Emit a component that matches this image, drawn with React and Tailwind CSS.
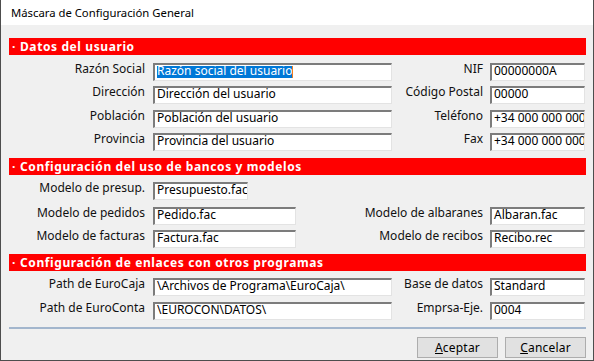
import React from 'react';

const font = { fontFamily: '"Noto Sans", "Liberation Sans", sans-serif' };

const Field = ({ value, width, selected }) => (
  <div
    className={`h-[18px] ${width} shrink-0 bg-white border-t-2 border-l-2 border-b border-r border-t-[#7c7c7c] border-l-[#7c7c7c] border-b-[#e3e3e3] border-r-[#e3e3e3] overflow-hidden whitespace-nowrap pl-[2px] pt-[1px] text-[12px] leading-[10px] text-black`}
  >
    {selected ? (
      <>
        <span className="inline-block h-[12px] bg-[#0078d7] text-white leading-[10px] align-top">{value}</span>
        <span className="inline-block w-px h-[12px] bg-[#f07d1e] align-top"></span>
      </>
    ) : (
      value
    )}
  </div>
);

const Label = ({ children, className = '' }) => (
  <div className={`text-[12px] leading-[16px] -mt-[2px] text-right text-[#111] whitespace-nowrap ${className}`}>{children}</div>
);

const Row = ({ left, right, className = '' }) => (
  <div className={`flex items-start pr-[1px] ${className}`}>
    <Label className="w-[136px] shrink-0">{left.label}</Label>
    <div className="ml-[8px]">
      <Field value={left.value} width={left.width} selected={left.selected} />
    </div>
    {right && (
      <>
        <Label className="flex-1">{right.label}</Label>
        <div className="ml-[7px]">
          <Field value={right.value} width="w-[95px]" />
        </div>
      </>
    )}
  </div>
);

const Header = ({ children, className = '' }) => (
  <div className={`h-[17px] bg-[#ff0000] text-white font-bold text-[12px] leading-[17px] tracking-[0.6px] pl-[3px] whitespace-nowrap ${className}`}>
    <span className="mr-[4px]">·</span>
    {children}
  </div>
);

const Button = ({ first, rest }) => (
  <button className="w-[81px] h-[21px] bg-[#e1e1e1] border border-[#adadad] text-[12px] leading-[16px] tracking-[0.2px] text-black">
    <span className="underline">{first}</span>
    {rest}
  </button>
);

export default function App() {
  return (
    <div style={font} className="w-[594px] h-[361px] bg-[#f0f0f0] border-l border-r border-b border-[#4d4d4d] flex flex-col">
      <div className="h-[25px] bg-white text-[11.3px] leading-[25px] pl-[10px] text-black shrink-0">
        Máscara de Configuración General
      </div>
      <div className="pl-[8px] pr-[7px] flex flex-col">
        <Header className="mt-[13px]">Datos del usuario</Header>
        <Row
          className="mt-[8px]"
          left={{ label: 'Razón Social', value: 'Razón social del usuario', width: 'w-[239px]', selected: true }}
          right={{ label: 'NIF', value: '00000000A' }}
        />
        <Row
          className="mt-[5px]"
          left={{ label: 'Dirección', value: 'Dirección del usuario', width: 'w-[239px]' }}
          right={{ label: 'Código Postal', value: '00000' }}
        />
        <Row
          className="mt-[6px]"
          left={{ label: 'Población', value: 'Población del usuario', width: 'w-[239px]' }}
          right={{ label: 'Teléfono', value: '+34 000 000 000' }}
        />
        <Row
          className="mt-[5px]"
          left={{ label: 'Provincia', value: 'Provincia del usuario', width: 'w-[239px]' }}
          right={{ label: 'Fax', value: '+34 000 000 000' }}
        />

        <Header className="mt-[7px]">Configuración del uso de bancos y modelos</Header>
        <Row
          className="mt-[7px]"
          left={{ label: 'Modelo de presup.', value: 'Presupuesto.fac', width: 'w-[95px]' }}
        />
        <Row
          className="mt-[7px]"
          left={{ label: 'Modelo de pedidos', value: 'Pedido.fac', width: 'w-[143px]' }}
          right={{ label: 'Modelo de albaranes', value: 'Albaran.fac' }}
        />
        <Row
          className="mt-[5px]"
          left={{ label: 'Modelo de facturas', value: 'Factura.fac', width: 'w-[143px]' }}
          right={{ label: 'Modelo de recibos', value: 'Recibo.rec' }}
        />

        <Header className="mt-[6px]">Configuración de enlaces con otros programas</Header>
        <Row
          className="mt-[7px]"
          left={{ label: 'Path de EuroCaja', value: '\\Archivos de Programa\\EuroCaja\\', width: 'w-[239px]' }}
          right={{ label: 'Base de datos', value: 'Standard' }}
        />
        <Row
          className="mt-[6px]"
          left={{ label: 'Path de EuroConta', value: '\\EUROCON\\DATOS\\', width: 'w-[239px]' }}
          right={{ label: 'Emprsa-Eje.', value: '0004' }}
        />

        <div className="mt-[7px] h-[2px] bg-[#a3b6cd]"></div>

        <div className="mt-[8px] flex justify-end gap-[7px]">
          <Button first="A" rest="ceptar" />
          <Button first="C" rest="ancelar" />
        </div>
      </div>
    </div>
  );
}
